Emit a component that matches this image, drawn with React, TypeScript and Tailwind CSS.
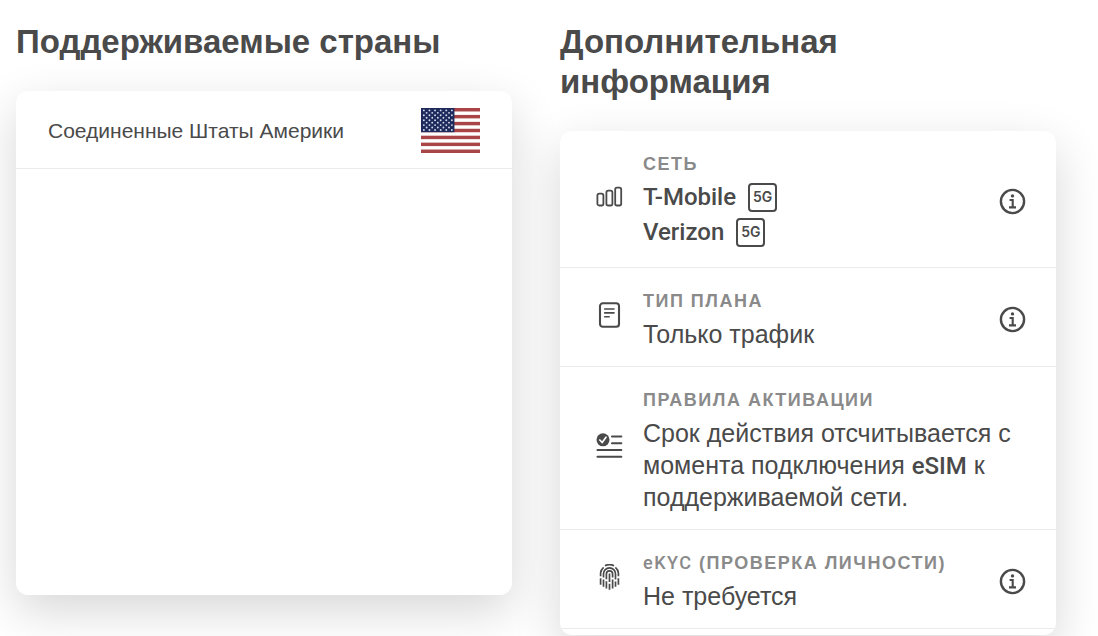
import type { ReactNode } from "react";

function SignalIcon() {
  return (
    <svg viewBox="0 0 27 27" className="size-[27px]" fill="none" stroke="#4a4a4a" strokeWidth="1.8" aria-hidden="true">
      <rect x="1.4" y="9.6" width="6" height="11.9" rx="1.8" />
      <rect x="10.4" y="6.7" width="6" height="14.8" rx="1.8" />
      <rect x="19.2" y="3.6" width="6" height="17.9" rx="1.8" />
    </svg>
  );
}

function PlanIcon() {
  return (
    <svg viewBox="0 0 27 27" className="size-[27px]" fill="none" stroke="#4a4a4a" strokeLinecap="round" aria-hidden="true">
      <rect x="4" y="1.3" width="19" height="23.5" rx="2.8" strokeWidth="2.1" />
      <path d="M8.7 7h9.3M8.7 10.9h9.3M8.7 14.8h4.5" strokeWidth="1.6" />
    </svg>
  );
}

function PolicyIcon() {
  return (
    <svg viewBox="0 0 27 27" className="size-[27px]" fill="none" strokeLinecap="round" aria-hidden="true">
      <circle cx="7" cy="6.8" r="6.5" fill="#4a4a4a" />
      <path d="M3.8 7 6.2 9.5 10 4.2" stroke="#fff" strokeWidth="1.7" />
      <path d="M16 3.5h9.3M16 10.2h9.3M1.5 17h23.8M1.5 23.8h23.8" stroke="#4a4a4a" strokeWidth="2.1" />
    </svg>
  );
}

function FingerprintIcon() {
  return (
    <svg viewBox="0 0 27 27" className="size-[27px]" fill="none" stroke="#4a4a4a" strokeWidth="1.7" aria-hidden="true">
      <path d="M9 1.7c2.9-1.3 6.1-1.3 9 0" />
      <path d="M4.6 12.2V9a8.8 8.8 0 0 1 3-5.7M4.6 14.2v6.5" />
      <path d="M19.4 3.3a8.8 8.8 0 0 1 3 5.7v3.2M22.4 14.2v6.5" />
      <path d="M7.5 22.8V15.4M7.5 13.4V9.8a6 6 0 0 1 12 0v5.8M19.5 17.4v5.4" />
      <path d="M10.4 24.4v-7.2M10.4 15.2V9.9a3.1 3.1 0 0 1 6.2 0v3.7M16.6 15.6v8.8" />
      <path d="M13.5 25.8v-6M13.5 18V9.6" />
    </svg>
  );
}

function InfoButton({ label }: { label: string }) {
  return (
    <button type="button" aria-label={label} className="shrink-0 cursor-pointer">
      <svg viewBox="0 0 27 27" className="size-[27px]" fill="none" stroke="#4a4a4a" aria-hidden="true">
        <circle cx="13.5" cy="13.5" r="11.6" strokeWidth="2.4" />
        <circle cx="13.5" cy="7.9" r="1.7" fill="#4a4a4a" stroke="none" />
        <path d="M10.6 12h3.1v7.3M10 19.4h7" strokeWidth="2.1" />
      </svg>
    </button>
  );
}

function FlagUS() {
  const stars: { x: number; y: number }[] = [];
  for (let row = 0; row < 9; row++) {
    const count = row % 2 === 0 ? 6 : 5;
    for (let i = 0; i < count; i++) {
      stars.push({ x: (row % 2 === 0 ? 2.9 : 5.7) + i * 5.7, y: 2.4 + row * 2.45 });
    }
  }
  return (
    <svg viewBox="0 0 60 45" preserveAspectRatio="none" className="h-[45px] w-[59px] shrink-0" role="img" aria-label="США">
      <rect width="60" height="45" fill="#fff" />
      {[0, 2, 4, 6, 8, 10, 12].map((n) => (
        <rect key={n} y={(n * 45) / 13} width="60" height={45 / 13} fill="#a94447" />
      ))}
      <rect width="34" height="24.2" fill="#1f2a5c" />
      {stars.map((s) => (
        <circle key={`${s.x}-${s.y}`} cx={s.x} cy={s.y} r="0.95" fill="#d4dbec" />
      ))}
    </svg>
  );
}

function Network({ name }: { name: string }) {
  return (
    <li className="mb-[3px] flex h-8 items-center gap-3 font-['Roboto',sans-serif]">
      <span className="text-2xl leading-8 font-medium">{name}</span>
      <span className="flex size-[29px] items-center justify-center rounded-[4px] border-[2px] border-[#4a4a4a] font-['Inter',sans-serif] text-sm leading-5 font-semibold">
        5G
      </span>
    </li>
  );
}

function InfoRow({ icon, label, info, children }: { icon: ReactNode; label: ReactNode; info?: string; children: ReactNode }) {
  return (
    <section className="flex items-center border-b border-[#ebebeb] pt-5 pr-[30px] pb-4 pl-9">
      <div className="mr-5 mb-2 shrink-0">{icon}</div>
      <div className="min-w-0 flex-1">
        <h3 className="mb-1 text-lg leading-[26px] font-bold tracking-[1.5px] text-[#8a8a8a]">{label}</h3>
        <div className="text-[25px] leading-8">{children}</div>
      </div>
      {info && <InfoButton label={info} />}
    </section>
  );
}

const heading = "mb-[29px] text-[33px] leading-10 font-bold";
const card = "min-h-[504px] overflow-hidden rounded-xl bg-white shadow-[0_16px_48px_rgba(0,0,0,0.16)]";

export default function App() {
  return (
    <main className="grid grid-cols-2 items-start gap-12 overflow-hidden bg-white pt-[22px] pr-[42px] pb-px pl-4 font-['Liberation_Sans',Arial,sans-serif] text-[#4a4a4a]">
      <div>
        <h2 className={heading}>Поддерживаемые страны</h2>
        <div className={card}>
          <div className="flex items-center justify-between border-b border-[#ebebeb] px-8 pt-[17px] pb-[15px]">
            <span className="text-[21px] leading-8">Соединенные Штаты Америки</span>
            <FlagUS />
          </div>
        </div>
      </div>
      <div>
        <h2 className={heading}>
          Дополнительная
          <br />
          информация
        </h2>
        <div className={card}>
          <InfoRow icon={<SignalIcon />} label="СЕТЬ" info="Подробнее о сети">
            <ul>
              <Network name="T-Mobile" />
              <Network name="Verizon" />
            </ul>
          </InfoRow>
          <InfoRow icon={<PlanIcon />} label="ТИП ПЛАНА" info="Подробнее о типе плана">
            Только трафик
          </InfoRow>
          <InfoRow icon={<PolicyIcon />} label="ПРАВИЛА АКТИВАЦИИ">
            Срок действия отсчитывается с момента подключения{" "}
            <span className="font-['Roboto',sans-serif] text-2xl leading-none font-medium">eSIM</span> к поддерживаемой сети.
          </InfoRow>
          <InfoRow
            icon={<FingerprintIcon />}
            label={
              <>
                <span className="font-['Roboto',sans-serif] leading-none font-medium">eKYC</span> (ПРОВЕРКА ЛИЧНОСТИ)
              </>
            }
            info="Подробнее о проверке личности"
          >
            Не требуется
          </InfoRow>
        </div>
      </div>
    </main>
  );
}
